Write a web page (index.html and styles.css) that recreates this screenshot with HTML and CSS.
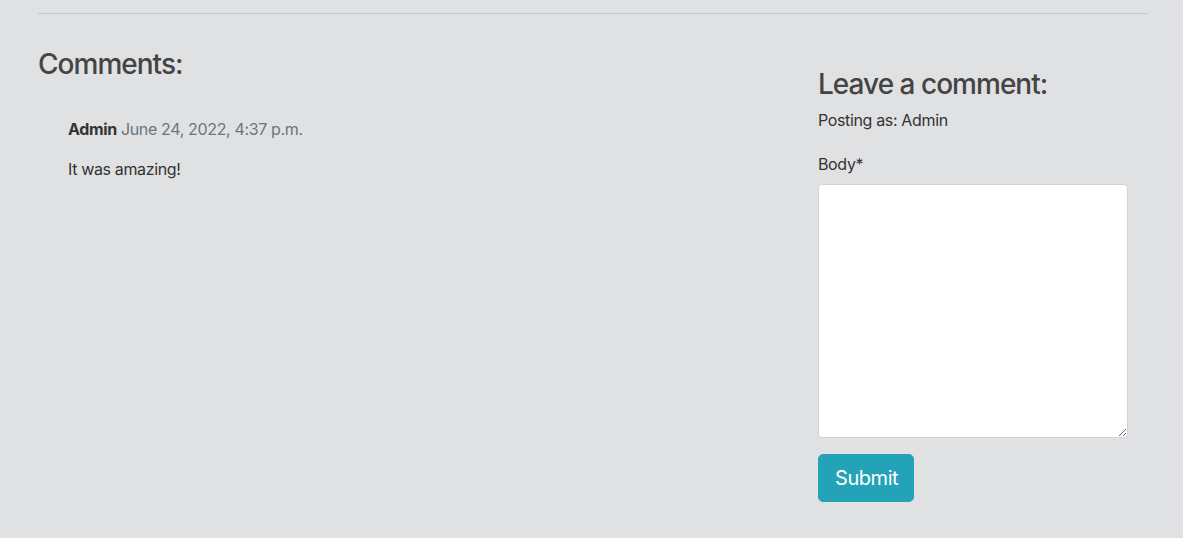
FILE: index.html
```html
<!DOCTYPE html>
<html lang="en">
<head>
<meta charset="utf-8">
<title>Comments</title>
<link rel="stylesheet" href="styles.css">
</head>
<body>
<div class="container">
  <hr class="divider">
  <div class="row">
    <div class="col-comments">
      <h3 class="heading">Comments:</h3>
      <div class="comment">
        <p class="meta"><span class="author">Admin</span> <span class="date">June 24, 2022, 4:37 p.m.</span></p>
        <p class="body">It was amazing!</p>
      </div>
    </div>
    <div class="col-form">
      <h3 class="heading">Leave a comment:</h3>
      <p class="posting">Posting as: Admin</p>
      <form class="form">
        <div class="form-group">
          <label class="label" for="id_body">Body*</label>
          <textarea id="id_body" class="textarea"></textarea>
        </div>
        <button type="button" class="btn-submit">Submit</button>
      </form>
    </div>
  </div>
</div>
</body>
</html>
```
FILE: styles.css
```css
html, body {
  margin: 0;
  padding: 0;
}
body {
  background: #e0e1e3;
  font-family: Inter, "Noto Sans", "Liberation Sans", sans-serif;
  font-size: 16px;
  line-height: 1.5;
  letter-spacing: -0.022em;
  color: #333;
  height: 538px;
}
.container {
  width: 1110px;
  margin-left: 38px;
  padding-top: 13px;
}
.divider {
  margin: 0;
  border: 0;
  border-top: 1px solid #c8c9cb;
}
.row {
  display: flex;
}
.col-comments {
  width: 760px;
  padding-top: 34px;
}
.col-form {
  width: 310px;
  margin-left: 20px;
  padding-top: 54px;
}
.heading {
  margin: 0 0 6px;
  font-size: 28px;
  font-weight: 500;
  line-height: 1.2;
  letter-spacing: -0.035em;
  color: #444;
}
.comment {
  padding-left: 30px;
  padding-top: 29px;
}
.comment p {
  margin: 0 0 16px;
}
.author {
  font-weight: 700;
  color: #333;
}
.date {
  color: #6c757d;
}
.posting {
  margin: 0 0 20px;
  color: #333;
}
.form-group {
  margin-bottom: 16px;
}
.label {
  display: inline-block;
  margin-bottom: 8px;
}
.textarea {
  display: block;
  box-sizing: border-box;
  width: 310px;
  height: 254px;
  margin: 0;
  padding: 6px 12px;
  border: 1px solid #ced4da;
  border-radius: 4px;
  background: #fff;
  font: inherit;
}
.btn-submit {
  display: inline-block;
  width: 96px;
  height: 48px;
  padding: 8px 16px;
  border: 1px solid #23a2b8;
  border-radius: 5px;
  background: #23a2b8;
  color: #fff;
  font-family: inherit;
  font-size: 20px;
  line-height: 1.5;
  letter-spacing: -0.022em;
}
```
